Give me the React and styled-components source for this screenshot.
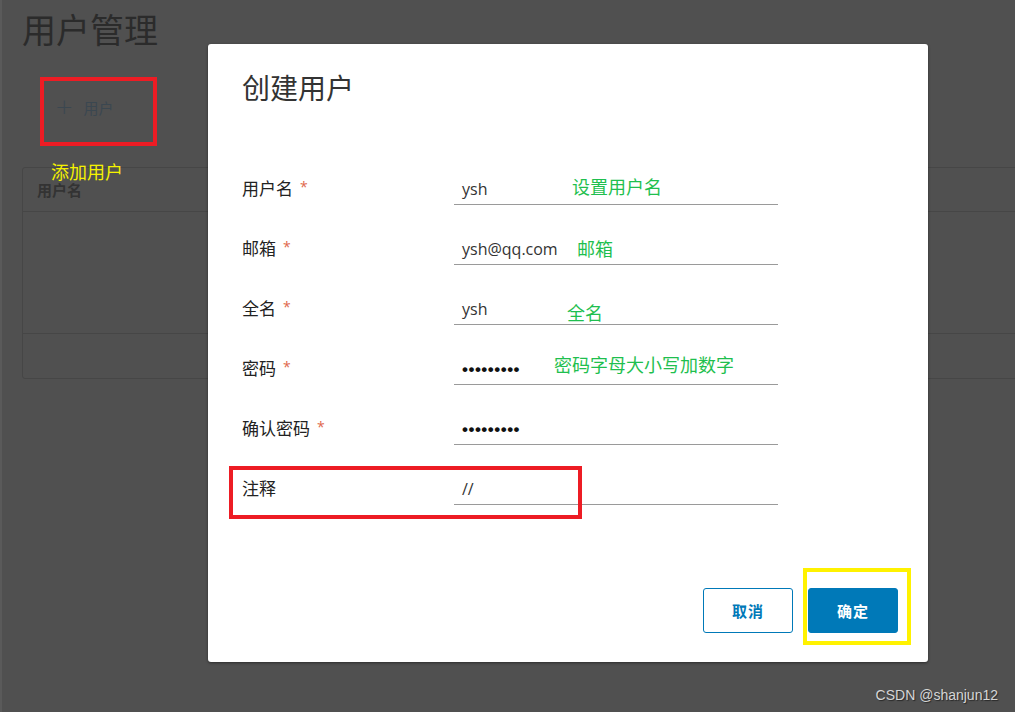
import React from "react";
import styled, { createGlobalStyle } from "styled-components";

const GlobalStyle = createGlobalStyle`
  html, body { margin: 0; padding: 0; background: #505050; }
  body { width: 1015px; height: 712px; overflow: hidden; font-family: "Open Sans", "Noto Sans CJK SC", sans-serif; }
  * { box-sizing: border-box; }
`;

const CJK = `"Open Sans", "Noto Sans CJK SC", sans-serif`;

const Page = styled.div`
  position: relative;
  width: 1015px;
  height: 712px;
  overflow: hidden;
  background: linear-gradient(to right, #5a5a5a 0, #5a5a5a 2px, #505050 2px);
  padding-left: 22px;
  display: flex;
  flex-direction: column;
`;

const PageTitle = styled.h1`
  margin: 8px 0 0;
  font-family: ${CJK};
  font-weight: 400;
  font-size: 34px;
  line-height: 44px;
  color: #2b2b2b;
`;

const ActionBar = styled.div`
  margin-top: 37px;
  height: 36px;
  display: flex;
  align-items: center;
  padding-left: 33px;
`;

const LinkButton = styled.span`
  display: inline-flex;
  align-items: center;
  gap: 10px;
  font-family: ${CJK};
  font-size: 15px;
  color: #3b4750;
`;

const Plus = styled.span`
  font-family: "DejaVu Sans", sans-serif;
  font-size: 22px;
  font-weight: 200;
  line-height: 1;
  color: #3b4750;
`;

const Table = styled.div`
  margin-top: 42px;
  width: 1010px;
  border: 1px solid #464646;
  border-radius: 3px;
  display: flex;
  flex-direction: column;
`;

const TableRow = styled.div`
  height: ${(p) => p.$h}px;
  border-bottom: ${(p) => (p.$last ? "none" : "1px solid #464646")};
  display: flex;
  align-items: center;
  padding-left: 14px;
`;

const HeaderCell = styled.span`
  font-family: ${CJK};
  font-size: 15px;
  font-weight: 700;
  color: #333333;
`;

const Modal = styled.div`
  position: absolute;
  left: 208px;
  top: 44px;
  width: 720px;
  height: 618px;
  background: #ffffff;
  border-radius: 3px;
  box-shadow: 0 1px 3px rgba(0, 0, 0, 0.45);
  display: flex;
  flex-direction: column;
  padding: 26px 30px 29px 34px;
`;

const ModalTitle = styled.h2`
  margin: 0;
  font-family: ${CJK};
  font-weight: 400;
  font-size: 28px;
  line-height: 36px;
  color: #333333;
`;

const Form = styled.div`
  margin-top: 39px;
  display: flex;
  flex-direction: column;
`;

const FormRow = styled.div`
  height: 60px;
  display: grid;
  grid-template-columns: 212px 324px;
  align-items: end;
`;

const Label = styled.div`
  height: 37px;
  padding-top: 6px;
  font-family: ${CJK};
  font-size: 17px;
  line-height: 30px;
  color: #222222;
  display: flex;
  align-items: flex-start;
`;

const Required = styled.span`
  margin-left: 7px;
  font-size: 14px;
  line-height: 26px;
  color: #e0674c;
`;

const Field = styled.div`
  height: 37px;
  padding: 6px 0 0 8px;
  border-bottom: 1px solid #9a9a9a;
  font-family: ${CJK};
  font-size: 16px;
  line-height: 30px;
  color: #333333;
  white-space: nowrap;
`;

const Dots = styled.span`
  font-family: "Liberation Sans", sans-serif;
  font-size: 17px;
  letter-spacing: 0.5px;
  font-weight: 700;
  color: #111111;
`;

const Footer = styled.div`
  margin-top: auto;
  display: flex;
  justify-content: flex-end;
  gap: 15px;
`;

const Button = styled.button`
  width: 90px;
  height: 45px;
  border-radius: 3px;
  border: 1px solid #0079b8;
  background: ${(p) => (p.$primary ? "#0079b8" : "#ffffff")};
  color: ${(p) => (p.$primary ? "#ffffff" : "#0079b8")};
  font-family: ${CJK};
  font-size: 15px;
  font-weight: 700;
  letter-spacing: 1px;
  cursor: pointer;
`;

const Note = styled.span`
  position: absolute;
  left: ${(p) => p.$x}px;
  top: ${(p) => p.$y}px;
  font-family: "Noto Sans CJK SC", sans-serif;
  font-size: 18px;
  line-height: 18px;
  color: ${(p) => p.$color};
  white-space: nowrap;
`;

const Frame = styled.div`
  position: absolute;
  left: ${(p) => p.$x}px;
  top: ${(p) => p.$y}px;
  width: ${(p) => p.$w}px;
  height: ${(p) => p.$h}px;
  border: 4px solid ${(p) => p.$color};
`;

const Watermark = styled.span`
  position: absolute;
  right: 17px;
  bottom: 9px;
  font-family: "Liberation Sans", sans-serif;
  font-size: 14px;
  color: #d6d6d6;
  text-shadow: 1px 1px 1px rgba(0, 0, 0, 0.5);
`;

const fields = [
  { label: "用户名", value: "ysh", req: true },
  { label: "邮箱", value: "ysh@qq.com", req: true },
  { label: "全名", value: "ysh", req: true },
  { label: "密码", dots: true, req: true },
  { label: "确认密码", dots: true, req: true },
  { label: "注释", value: "//", req: false },
];

const GREEN = "#1fbf4f";

export default function App() {
  return (
    <>
      <GlobalStyle />
      <Page>
        <PageTitle>用户管理</PageTitle>
        <ActionBar>
          <LinkButton>
            <Plus>+</Plus>
            用户
          </LinkButton>
        </ActionBar>
        <Table>
          <TableRow $h={44}>
            <HeaderCell>用户名</HeaderCell>
          </TableRow>
          <TableRow $h={122} />
          <TableRow $h={44} $last />
        </Table>

        <Modal>
          <ModalTitle>创建用户</ModalTitle>
          <Form>
            {fields.map((f) => (
              <FormRow key={f.label}>
                <Label>
                  {f.label}
                  {f.req && <Required>*</Required>}
                </Label>
                <Field>{f.dots ? <Dots>•••••••••</Dots> : f.value}</Field>
              </FormRow>
            ))}
          </Form>
          <Footer>
            <Button>取消</Button>
            <Button $primary>确定</Button>
          </Footer>
        </Modal>

        <Note $x={51} $y={162} $color="#f5f200">添加用户</Note>
        <Note $x={572} $y={177} $color={GREEN}>设置用户名</Note>
        <Note $x={577} $y={239} $color={GREEN}>邮箱</Note>
        <Note $x={567} $y={303} $color={GREEN}>全名</Note>
        <Note $x={554} $y={355} $color={GREEN}>密码字母大小写加数字</Note>

        <Frame $x={40} $y={77} $w={117} $h={69} $color="#ed1c24" />
        <Frame $x={229} $y={466} $w={353} $h={53} $color="#ed1c24" />
        <Frame $x={803} $y={568} $w={108} $h={77} $color="#fff200" />

        <Watermark>CSDN @shanjun12</Watermark>
      </Page>
    </>
  );
}
